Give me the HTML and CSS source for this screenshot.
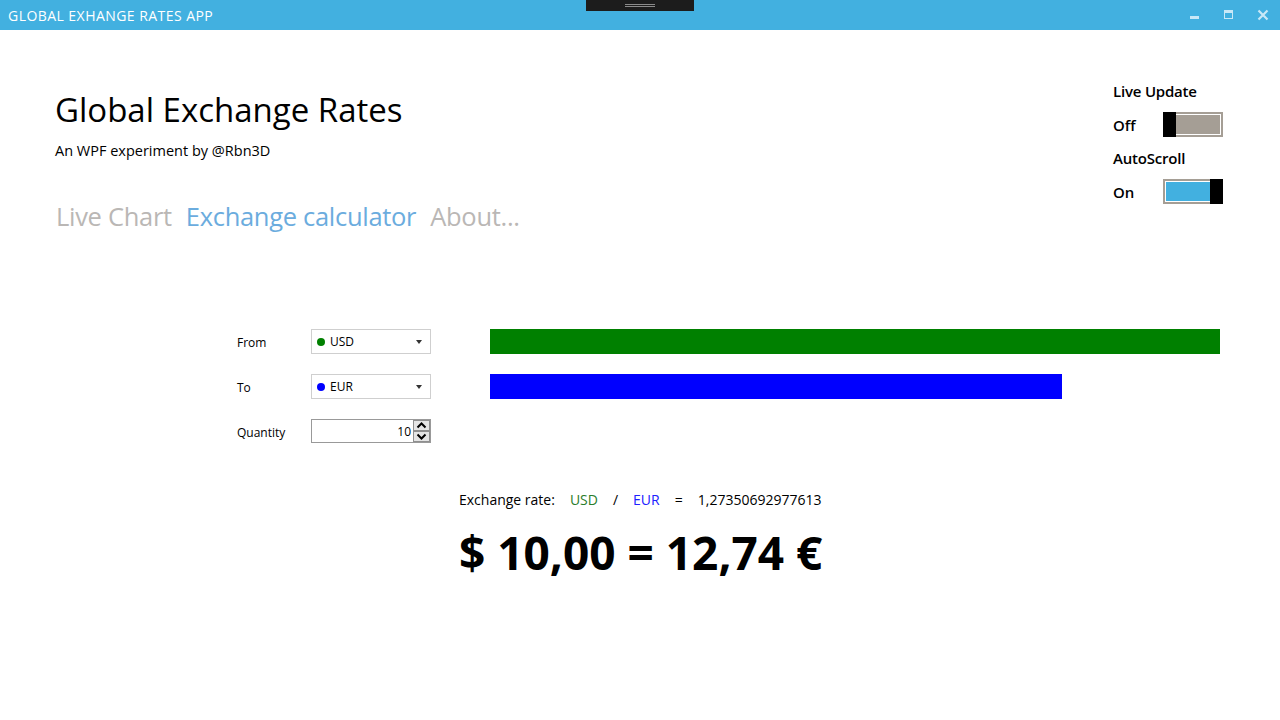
FILE: index.html
```html
<!DOCTYPE html>
<html>
<head>
<meta charset="utf-8">
<link rel="stylesheet" href="styles.css">
</head>
<body>
<div class="titlebar">
  <span class="app-title">GLOBAL EXHANGE RATES APP</span>
  <div class="grip"><span></span><span></span></div>
  <div class="win-buttons">
    <span class="wb"><svg width="12" height="12" viewBox="0 0 12 12"><rect x="1" y="7" width="9" height="3" fill="#c9e8f7"/></svg></span>
    <span class="wb"><svg width="12" height="12" viewBox="0 0 12 12"><rect x="1.5" y="1.5" width="8" height="8" fill="none" stroke="#c9e8f7"/><rect x="1" y="1" width="9" height="3" fill="#c9e8f7"/></svg></span>
    <span class="wb"><svg width="12" height="12" viewBox="0 0 12 12"><path d="M1.5 1.5 L10.5 10.5 M10.5 1.5 L1.5 10.5" stroke="#c9e8f7" stroke-width="2.2"/></svg></span>
  </div>
</div>

<div class="header">
  <div class="brand">
    <h1 class="title">Global Exchange Rates</h1>
    <p class="subtitle">An WPF experiment by @Rbn3D</p>
    <nav class="nav">
      <span class="nav-item">Live Chart</span>
      <span class="nav-item active">Exchange calculator</span>
      <span class="nav-item">About...</span>
    </nav>
  </div>
  <div class="settings">
    <div class="setting-label">Live Update</div>
    <div class="setting-row">
      <span class="state">Off</span>
      <span class="toggle off"><span class="thumb"></span><span class="track"></span></span>
    </div>
    <div class="setting-label">AutoScroll</div>
    <div class="setting-row">
      <span class="state">On</span>
      <span class="toggle on"><span class="track"></span><span class="thumb"></span></span>
    </div>
  </div>
</div>

<div class="calc">
  <div class="form">
    <div class="label">From</div>
    <div class="combo"><span class="dot green"></span><span class="combo-text">USD</span><span class="caret"></span></div>
    <div class="bar-cell"><div class="bar green-bar" style="width:730px"></div></div>

    <div class="label">To</div>
    <div class="combo"><span class="dot blue"></span><span class="combo-text">EUR</span><span class="caret"></span></div>
    <div class="bar-cell"><div class="bar blue-bar" style="width:572px"></div></div>

    <div class="label">Quantity</div>
    <div class="numeric">
      <span class="num-value">10</span>
      <span class="spin">
        <span class="spin-btn"><svg width="11" height="7" viewBox="0 0 11 7"><path d="M1.5 5.5 L5.5 1.5 L9.5 5.5" fill="none" stroke="#000" stroke-width="2"/></svg></span>
        <span class="spin-btn"><svg width="11" height="7" viewBox="0 0 11 7"><path d="M1.5 1.5 L5.5 5.5 L9.5 1.5" fill="none" stroke="#000" stroke-width="2"/></svg></span>
      </span>
    </div>
    <div></div>
  </div>

  <div class="result">
    <div class="rate-line">
      <span>Exchange rate:</span>
      <span class="usd">USD</span>
      <span>/</span>
      <span class="eur">EUR</span>
      <span>=</span>
      <span>1,27350692977613</span>
    </div>
    <div class="big">$ 10,00 = 12,74 €</div>
  </div>
</div>
</body>
</html>
```
FILE: styles.css
```css
* { box-sizing: border-box; }
html, body { margin: 0; padding: 0; }
body {
  width: 1280px;
  height: 720px;
  background: #fff;
  font-family: "Open Sans", "Noto Sans", sans-serif;
  color: #000;
  overflow: hidden;
}
.titlebar {
  position: relative;
  height: 30px;
  background: #42b0e0;
  display: flex;
  align-items: center;
  justify-content: space-between;
}
.app-title {
  margin-left: 8px;
  color: #fff;
  font-size: 14px;
  letter-spacing: 0.45px;
}
.grip {
  position: absolute;
  left: 586px;
  top: 0;
  width: 108px;
  height: 11px;
  background: #1c1c1c;
  display: flex;
  flex-direction: column;
  align-items: center;
  padding-top: 4px;
  gap: 1px;
}
.grip span {
  display: block;
  width: 30px;
  height: 1px;
  background: #8a8a8a;
}
.win-buttons {
  display: flex;
  align-items: center;
}
.wb {
  width: 34px;
  height: 30px;
  display: flex;
  align-items: center;
  justify-content: center;
}
.header {
  display: flex;
  justify-content: space-between;
  padding: 0 57px 0 55px;
}
.brand { padding-top: 57px; }
.title {
  margin: 0;
  font-weight: 400;
  font-size: 33px;
  line-height: 46px;
  letter-spacing: 0;
}
.subtitle {
  margin: 0;
  font-size: 14.5px;
  line-height: 20px;
  margin-top: 8px;
}
.nav {
  display: flex;
  gap: 14px;
  margin-top: 38px;
  margin-left: 1px;
}
.nav-item {
  font-size: 25.5px;
  line-height: 34px;
  color: #bab7b5;
  letter-spacing: -0.3px;
}
.nav-item.active { color: #6bacde; }
.settings {
  width: 110px;
  padding-top: 50px;
}
.setting-label {
  font-size: 15px;
  font-weight: 600;
  line-height: 22px;
  letter-spacing: -0.2px;
}
.setting-row {
  display: flex;
  align-items: center;
  justify-content: space-between;
  height: 25px;
  margin-top: 10px;
  margin-bottom: 10px;
}
.state {
  font-size: 15px;
  font-weight: 600;
}
.toggle {
  width: 60px;
  height: 25px;
  display: flex;
}
.thumb {
  width: 13px;
  height: 25px;
  background: #000;
}
.track {
  flex: 1;
  height: 25px;
  border: 2px solid #a59e95;
  padding: 1px;
  background-clip: content-box;
}
.toggle.off .track { background-color: #a59e95; border-left: 0; padding-left: 0; }
.toggle.on .track { background-color: #42b0e0; border-right: 0; padding-right: 0; }
.calc {
  padding-left: 237px;
  margin-top: 96px;
}
.form {
  display: grid;
  grid-template-columns: 74px 120px 789px;
  column-gap: 0;
  row-gap: 20px;
  grid-auto-rows: 25px;
  font-size: 12px;
}
.label {
  display: flex;
  align-items: center;
  font-size: 12px;
  padding-top: 1px;
}
.combo {
  border: 1px solid #cfcfcf;
  display: flex;
  align-items: center;
  padding-left: 5px;
  padding-right: 8px;
  background: #fff;
}
.dot {
  width: 8px;
  height: 8px;
  border-radius: 50%;
  margin-right: 5px;
}
.dot.green { background: #008000; }
.dot.blue { background: #0000ff; }
.combo-text { flex: 1; font-size: 12px; }
.caret {
  width: 0; height: 0;
  border-left: 3px solid transparent;
  border-right: 3px solid transparent;
  border-top: 4px solid #333;
}
.bar-cell { display: flex; padding-left: 59px; }
.bar { height: 25px; }
.green-bar { background: #008000; }
.blue-bar { background: #0000ff; }
.numeric {
  border: 1px solid #999;
  display: flex;
  align-items: center;
  height: 24px;
}
.num-value {
  flex: 1;
  text-align: right;
  padding-right: 2px;
  font-size: 12px;
}
.spin {
  display: flex;
  flex-direction: column;
  width: 17px;
  height: 22px;
}
.spin-btn {
  flex: 1;
  border: 1px solid #8f8f8f;
  background: #e5e5e5;
  display: flex;
  align-items: center;
  justify-content: center;
}
.result {
  margin-left: 222px;
  margin-top: 46px;
}
.rate-line {
  display: flex;
  font-size: 14px;
  line-height: 20px;
}
.rate-line span { margin-right: 15px; }
.rate-line .usd { color: #2a7d2a; }
.rate-line .eur { color: #2020ff; }
.big {
  font-size: 46px;
  font-weight: 700;
  line-height: 60px;
  margin-top: 12px;
}
```
